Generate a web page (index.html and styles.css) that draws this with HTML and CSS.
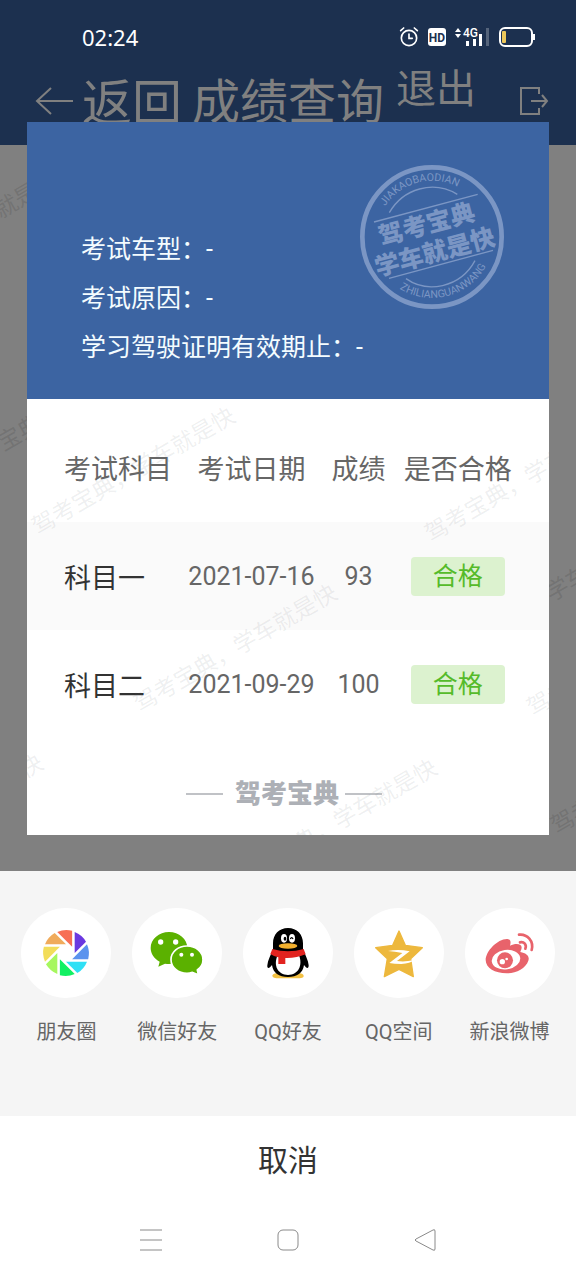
FILE: index.html
```html
<!DOCTYPE html>
<html lang="zh-CN">
<head>
  <meta charset="UTF-8">
  <meta name="viewport" content="width=device-width, initial-scale=1">
  <title>成绩查询</title>
  <link rel="stylesheet" href="styles.css">
</head>
<body>
  <header class="header">
    <div class="status-bar">
      <span class="time">02:24</span>
      <div class="status-icons">
        <svg width="20" height="22" viewBox="0 0 60 66" fill="none" stroke="#fff" stroke-width="5" stroke-linecap="round">
          <circle cx="30" cy="36" r="23"/>
          <path d="M30 24v13h10M5 14l9-8M55 14l-9-8"/>
        </svg>
        <svg width="18" height="20" viewBox="0 0 18 20">
          <rect y="1" width="18" height="18" rx="3" fill="#fff"/>
          <text class="hd" x="9" y="15" text-anchor="middle">HD</text>
        </svg>
        <svg width="35" height="20" viewBox="0 0 35 20" fill="#fff">
          <path d="M0 5l3-4 3 4zM0 7l3 4 3-4z"/>
          <text class="net" x="8" y="10">4G</text>
          <path d="M11 14h3v5h-3zM18 12h3v7h-3zM24 7h3v12h-3z"/>
          <path d="M31 1h3v18h-3z" opacity=".25"/>
        </svg>
        <svg width="36" height="20" viewBox="0 0 36 20" fill="none">
          <rect x="1" y="1" width="32" height="18" rx="5" stroke="#fff" stroke-width="2"/>
          <rect x="3" y="4" width="4" height="12" rx="1" fill="#ecc75a"/>
          <path d="M35 7v6" stroke="#fff" stroke-width="2"/>
        </svg>
      </div>
    </div>
    <nav class="nav">
      <a href="#" class="back">
        <svg width="38" height="28" viewBox="0 0 38 28" fill="none" stroke="#808080" stroke-width="2">
          <path d="M38 14H2M16 1L2 14l14 13"/>
        </svg>
        <span>返回</span>
      </a>
      <h1 class="title">成绩查询</h1>
      <a href="#" class="exit">退出</a>
      <a href="#" class="exit-icon" aria-label="退出">
        <svg width="30" height="28" viewBox="0 0 30 28" fill="none" stroke="#808080" stroke-width="2">
          <path d="M20 7V1H2v26h18v-6M12 14h16M23 8l5 6-5 6"/>
        </svg>
      </a>
    </nav>
  </header>

  <main class="page">
    <svg class="watermark watermark-dark" aria-hidden="true">
      <text transform="translate(-143 148) rotate(-30)">驾考宝典，学车就是快</text>
      <text transform="translate(-40 323) rotate(-30)">驾考宝典，学车就是快</text>
      <text transform="translate(448 508) rotate(-30)">驾考宝典，学车就是快</text>
      <text transform="translate(553 683) rotate(-30)">驾考宝典，学车就是快</text>
    </svg>

    <article class="card">
      <div class="card-header">
        <p>考试车型：-</p>
        <p>考试原因：-</p>
        <p>学习驾驶证明有效期止：-</p>
        <svg class="stamp" viewBox="60 45 432 432" fill="none" stroke="#7b96c4">
          <defs>
            <path id="arcTop" d="M128 182A167 167 0 0 1 424 182"/>
            <path id="arcBottom" d="M92 285A186 186 0 0 0 460 285"/>
          </defs>
          <circle cx="276" cy="261" r="209" stroke-width="14"/>
          <path stroke-width="4" d="M102 216L413 133M147 385L459 301M148 188C190 115 280 90 352 133M198 386C260 430 360 415 405 332"/>
          <g fill="#7b96c4" stroke="none">
            <text class="stamp-latin" text-anchor="middle"><textPath href="#arcTop" startOffset="38%">JIAKAOBAODIAN</textPath></text>
            <text class="stamp-latin" text-anchor="middle"><textPath href="#arcBottom" startOffset="59%">ZHILIANGUANWANG</textPath></text>
            <text class="stamp-name" text-anchor="middle" transform="translate(267 248) rotate(-15)">驾考宝典</text>
            <text class="stamp-name" text-anchor="middle" transform="translate(291 332) rotate(-15)">学车就是快</text>
          </g>
        </svg>
      </div>

      <div class="results">
        <table class="score-table">
          <thead>
            <tr>
              <th>考试科目</th>
              <th>考试日期</th>
              <th>成绩</th>
              <th>是否合格</th>
            </tr>
          </thead>
          <tbody>
            <tr>
              <td>科目一</td>
              <td>2021-07-16</td>
              <td>93</td>
              <td><span class="badge">合格</span></td>
            </tr>
            <tr>
              <td>科目二</td>
              <td>2021-09-29</td>
              <td>100</td>
              <td><span class="badge">合格</span></td>
            </tr>
          </tbody>
        </table>
        <div class="brand">驾考宝典</div>
        <svg class="watermark" aria-hidden="true">
          <text transform="translate(7 130) rotate(-30)">驾考宝典，学车就是快</text>
          <text transform="translate(400 137) rotate(-30)">驾考宝典，学车就是快</text>
          <text transform="translate(109 307) rotate(-30)">驾考宝典，学车就是快</text>
          <text transform="translate(502 311) rotate(-30)">驾考宝典，学车就是快</text>
          <text transform="translate(209 482) rotate(-30)">驾考宝典，学车就是快</text>
          <text transform="translate(-185 477) rotate(-30)">驾考宝典，学车就是快</text>
          <text transform="translate(84 555) rotate(-30)">驾考宝典，学车就是快</text>
        </svg>
      </div>
    </article>
  </main>

  <section class="sheet">
    <div class="share-list">
      <button type="button" class="share-item">
        <svg class="share-icon" viewBox="0 0 270 270">
          <defs><path id="blade" d="M26 0V-63A68 68 0 0 1 60 -34Z"/></defs>
          <g transform="translate(135 135)">
            <use href="#blade" fill="#6b38e0"/>
            <use href="#blade" fill="#5b93ee" transform="rotate(45)"/>
            <use href="#blade" fill="#2fe0f5" transform="rotate(90)"/>
            <use href="#blade" fill="#12f062" transform="rotate(135)"/>
            <use href="#blade" fill="#a6f75e" transform="rotate(180)"/>
            <use href="#blade" fill="#f2dd5a" transform="rotate(225)"/>
            <use href="#blade" fill="#f0ab5b" transform="rotate(270)"/>
            <use href="#blade" fill="#f76f55" transform="rotate(315)"/>
          </g>
        </svg>
        <span>朋友圈</span>
      </button>
      <button type="button" class="share-item">
        <svg class="share-icon" viewBox="0 0 270 270" fill="#5bb100">
          <path d="M111 72C141 72 166 93 166 120S141 168 111 168Q105 168 99 167L79 176L83 161C66 152 56 137 56 120C56 93 81 72 111 72Z"/>
          <path stroke="#fff" stroke-width="5" d="M165 114C191 114 213 132 213 155C213 168 207 178 196 186L199 200L181 193Q173 196 165 196C139 196 117 178 117 155S139 114 165 114Z"/>
          <g fill="#fff">
            <circle cx="86" cy="102" r="8"/>
            <circle cx="131" cy="102" r="8"/>
            <circle cx="148" cy="140" r="6"/>
            <circle cx="180" cy="140" r="6"/>
          </g>
        </svg>
        <span>微信好友</span>
      </button>
      <button type="button" class="share-item">
        <svg class="share-icon" viewBox="0 0 270 270">
          <path fill="#f2c043" d="M88 203Q90 195 105 195H165Q180 195 182 203T160 211H110Q88 211 88 203Z"/>
          <path fill="#000" d="M135 60C162 60 180 79 180 106V124C187 142 196 158 197 172C197 182 192 184 183 171C180 195 162 207 135 207S90 195 87 171C78 184 72 182 73 172C74 158 83 142 90 124V106C90 79 108 60 135 60Z"/>
          <path fill="#fff" d="M104 142H168C180 172 166 201 135 201S90 172 104 142Z"/>
          <path fill="#e2231f" d="M88 123Q135 137 182 123L188 139Q160 151 127 150V168H106V148Q92 145 82 138Z"/>
          <ellipse cx="135" cy="114" rx="28" ry="8" fill="#f2b02e"/>
          <g fill="#fff">
            <ellipse cx="123" cy="91" rx="9" ry="13"/>
            <ellipse cx="147" cy="91" rx="9" ry="13"/>
          </g>
          <ellipse cx="126" cy="92" rx="4" ry="6"/>
          <path d="M142 93q4-8 8 0" fill="none" stroke="#000" stroke-width="4"/>
        </svg>
        <span>QQ好友</span>
      </button>
      <button type="button" class="share-item">
        <svg class="share-icon" viewBox="0 0 270 270">
          <path fill="#edb83d" stroke="#edb83d" stroke-width="4" stroke-linejoin="round" d="M135 69L154 112L205 119L170 152L178 206L135 184L91 206L100 152L65 119L116 112Z"/>
          <path fill="#fff" d="M102 129Q134 123 167 130L129 159Q152 162 178 157Q170 167 142 168Q120 168 106 165L145 135Q122 131 102 129Z"/>
        </svg>
        <span>QQ空间</span>
      </button>
      <button type="button" class="share-item">
        <svg class="share-icon" viewBox="0 0 270 270" fill="#e8636b">
          <path d="M62 156C62 130 98 92 127 93C138 94 138 104 135 113C150 106 169 106 170 118C170 126 166 130 166 132C184 135 195 145 190 158C182 182 152 196 125 196C90 196 62 180 62 156Z"/>
          <ellipse cx="123" cy="155" rx="43" ry="29" fill="#fff" transform="rotate(-8 123 155)"/>
          <circle cx="120" cy="157" r="24"/>
          <circle cx="112" cy="161" r="8" fill="#fff"/>
          <circle cx="125" cy="153" r="4" fill="#fff"/>
          <path fill="none" stroke="#e8636b" stroke-width="8" stroke-linecap="round" d="M162 80C187 77 207 100 200 126M165 103C177 100 186 110 181 122"/>
        </svg>
        <span>新浪微博</span>
      </button>
    </div>
    <button type="button" class="cancel">取消</button>
    <div class="system-nav">
      <button type="button" aria-label="菜单">
        <svg viewBox="0 0 24 24"><path d="M1 2h22M1 12h22M1 22h22"/></svg>
      </button>
      <button type="button" aria-label="主屏幕">
        <svg viewBox="0 0 24 24"><rect x="2" y="2" width="20" height="20" rx="5"/></svg>
      </button>
      <button type="button" aria-label="返回">
        <svg viewBox="0 0 24 24"><path d="M20 2Q22 1 22 3V21Q22 23 20 22L3 13Q1 12 3 11Z"/></svg>
      </button>
    </div>
  </section>
</body>
</html>
```
FILE: styles.css
```css
* {
  box-sizing: border-box;
}

body {
  font-family: Roboto, "Noto Sans CJK SC", sans-serif;
  margin: 0;
  min-height: 100vh;
  display: flex;
  flex-direction: column;
  background: #808080;
}

button {
  font-family: inherit;
  border: none;
  padding: 0;
  background: none;
  cursor: pointer;
}

svg {
  display: block;
}

.header {
  background: #1c304f;
}

.status-bar {
  display: flex;
  justify-content: space-between;
  align-items: center;
  height: 57px;
  padding: 16px 41px 0 82px;
}

.time {
  font-family: "Noto Sans", sans-serif;
  font-size: 22px;
  color: #fff;
}

.status-icons {
  display: flex;
  align-items: center;
  gap: 9px;
}

.hd {
  font-size: 12px;
  font-weight: bold;
  fill: #1c304f;
}

.net {
  font-size: 12px;
  font-weight: 500;
}

.nav {
  display: flex;
  align-items: flex-start;
  height: 88px;
  padding: 0 27px 0 35px;
  white-space: nowrap;
}

.nav a,
.title {
  color: #808080;
  font-weight: normal;
  text-decoration: none;
}

.back {
  display: flex;
  align-items: flex-start;
  gap: 9px;
  font-size: 50px;
  line-height: 94px;
}

.back svg,
.exit-icon svg {
  margin-top: 30px;
}

.title {
  margin: 0 0 0 10px;
  font-size: 48px;
  line-height: 92px;
}

.exit {
  margin-left: 12px;
  font-size: 40px;
  line-height: 66px;
}

.exit-icon {
  margin-left: auto;
}

.page {
  position: relative;
  display: flow-root;
  padding: 0 27px 36px;
}

.card {
  position: relative;
  margin-top: -23px;
  background: #fff;
}

.card-header {
  position: relative;
  padding: 103px 54px 27px;
  background: #3c64a2;
}

.card-header p {
  margin: 0;
  font-size: 25px;
  line-height: 49px;
  color: #f4fcff;
}

.stamp {
  position: absolute;
  top: 43px;
  right: 45px;
  width: 144px;
  height: 144px;
}

.stamp-latin {
  font-size: 32px;
}

.stamp-name {
  font-size: 74px;
  font-weight: 900;
}

.results {
  position: relative;
}

.score-table {
  width: 100%;
  table-layout: fixed;
  border-collapse: collapse;
  text-align: center;
  white-space: nowrap;
  color: #666;
}

.score-table th {
  width: 29%;
  height: 123px;
  padding: 14px 0 0;
  font-size: 27px;
  font-weight: normal;
}

.score-table th:nth-child(2) {
  width: 28%;
}

.score-table th:nth-child(3) {
  width: 13%;
}

.score-table th:nth-child(4) {
  width: 30%;
}

.score-table td {
  height: 108px;
  padding: 0;
  font-size: 25px;
}

.score-table th:first-child,
.score-table td:first-child {
  padding-left: 37px;
  text-align: left;
}

.score-table td:first-child {
  font-size: 27px;
  color: #333;
}

.score-table th:last-child,
.score-table td:last-child {
  padding-right: 26px;
}

.score-table tbody tr:nth-child(odd) {
  background: #fafafa;
}

.badge {
  display: inline-block;
  width: 94px;
  border-radius: 4px;
  line-height: 39px;
  background: #dcf2cf;
  color: #55bb2a;
  vertical-align: middle;
}

.brand {
  display: flex;
  justify-content: center;
  align-items: center;
  padding: 36px 8px 21px 0;
  font-size: 26px;
  font-weight: 900;
  line-height: 40px;
  color: #adb0b6;
}

.brand::before,
.brand::after {
  content: "";
  width: 37px;
  height: 2px;
  background: #c0c2c6;
}

.brand::before {
  margin-right: 12px;
}

.brand::after {
  margin-left: 6px;
}

.watermark {
  position: absolute;
  top: 0;
  left: 0;
  width: 100%;
  height: 100%;
  font-size: 23px;
  fill: rgba(90, 100, 110, 0.1);
  pointer-events: none;
}

.watermark text {
  dominant-baseline: central;
}

.watermark-dark {
  fill: rgba(60, 60, 60, 0.2);
}

.sheet {
  position: relative;
  flex: 1;
  background: #fff;
}

.share-list {
  display: grid;
  grid-template-columns: repeat(5, 1fr);
  padding: 37px 11px 69px;
  background: #f5f5f5;
}

.share-item {
  display: flex;
  flex-direction: column;
  align-items: center;
  gap: 19px;
  font-size: 20px;
  line-height: 30px;
  color: #666;
  white-space: nowrap;
}

.share-icon {
  width: 90px;
  height: 90px;
  border-radius: 50%;
  background: #fff;
}

.cancel {
  display: block;
  width: 100%;
  font-size: 30px;
  line-height: 90px;
  color: #333;
}

.system-nav {
  display: flex;
  justify-content: space-around;
  height: 68px;
  padding: 0 82px;
}

.system-nav svg {
  width: 24px;
  height: 24px;
  fill: none;
  stroke: #8a8a8a;
  stroke-width: 1;
}
```
